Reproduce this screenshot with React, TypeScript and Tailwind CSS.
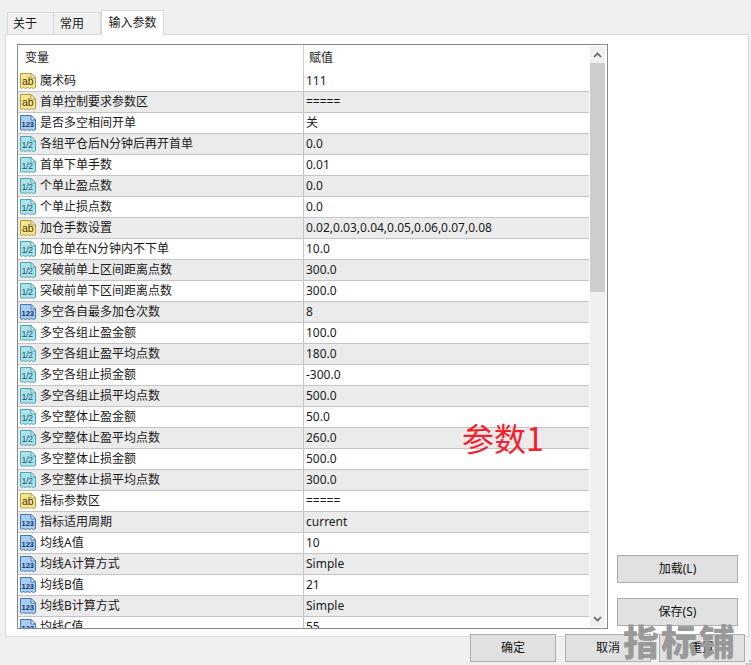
const rows: [string, string, string][] = [
  ['ab', '魔术码', '111'],
  ['ab', '首单控制要求参数区', '====='],
  ['int', '是否多空相间开单', '关'],
  ['dbl', '各组平仓后N分钟后再开首单', '0.0'],
  ['dbl', '首单下单手数', '0.01'],
  ['dbl', '个单止盈点数', '0.0'],
  ['dbl', '个单止损点数', '0.0'],
  ['ab', '加仓手数设置', '0.02,0.03,0.04,0.05,0.06,0.07,0.08'],
  ['dbl', '加仓单在N分钟内不下单', '10.0'],
  ['dbl', '突破前单上区间距离点数', '300.0'],
  ['dbl', '突破前单下区间距离点数', '300.0'],
  ['int', '多空各自最多加仓次数', '8'],
  ['dbl', '多空各组止盈金额', '100.0'],
  ['dbl', '多空各组止盈平均点数', '180.0'],
  ['dbl', '多空各组止损金额', '-300.0'],
  ['dbl', '多空各组止损平均点数', '500.0'],
  ['dbl', '多空整体止盈金额', '50.0'],
  ['dbl', '多空整体止盈平均点数', '260.0'],
  ['dbl', '多空整体止损金额', '500.0'],
  ['dbl', '多空整体止损平均点数', '300.0'],
  ['ab', '指标参数区', '====='],
  ['int', '指标适用周期', 'current'],
  ['int', '均线A值', '10'],
  ['int', '均线A计算方式', 'Simple'],
  ['int', '均线B值', '21'],
  ['int', '均线B计算方式', 'Simple'],
  ['int', '均线C值', '55'],
]

const iconColors: Record<string, { fill: string; stroke: string; text: string; label: string }> = {
  ab: { fill: '#f6e48e', stroke: '#b39c3c', text: '#4a3c08', label: 'ab' },
  int: { fill: '#a9cdf0', stroke: '#3f77b0', text: '#0c3566', label: '123' },
  dbl: { fill: '#ace3e8', stroke: '#49a3b2', text: '#14587a', label: '1/2' },
}

function TypeIcon({ type }: { type: string }) {
  const c = iconColors[type]
  return (
    <svg width="16" height="16" viewBox="0 0 16 16" className="shrink-0">
      <path
        d="M0.5 0.5 H11 L15.5 5 V14.5 L13.5 15.5 L11.5 14.5 L9.5 15.5 L7.5 14.5 L5.5 15.5 L3.5 14.5 L1.5 15.5 L0.5 14.5 Z"
        fill={c.fill}
        stroke={c.stroke}
      />
      <path d="M11 0.5 V5 H15.5 Z" fill="#ffffff" stroke={c.stroke} />
      <text
        x={type === 'ab' ? 2 : 1.5}
        y={type === 'int' ? 11.5 : 12}
        fontSize={type === 'ab' ? 10.5 : type === 'int' ? 7.5 : 9}
        fontWeight={type === 'int' ? 700 : 400}
        letterSpacing={type === 'dbl' ? -0.5 : 0}
        fontFamily="Liberation Sans, sans-serif"
        fill={c.text}
      >
        {c.label}
      </text>
    </svg>
  )
}

function Btn({ label, className }: { label: string; className: string }) {
  return (
    <div className={`flex items-center justify-center bg-[#e1e1e1] border border-[#adadad] text-[12px] text-[#111] ${className}`}>
      {label}
    </div>
  )
}

export default function App() {
  return (
    <div
      className="relative w-[751px] h-[665px] overflow-hidden bg-[#f0f0f0] text-[12px] text-[#1a1a1a]"
      style={{ fontFamily: '"Noto Sans", "Noto Sans CJK SC", sans-serif' }}
    >
      {/* Tabs */}
      <div className="flex items-end h-[35px] pl-[7px] relative z-10">
        <div className="w-[47px] h-[22px] flex items-center pl-[5px] border border-b-0 border-[#d9d9d9] bg-[#f0f0f0] mb-px">关于</div>
        <div className="w-[47px] h-[22px] flex items-center pl-[6px] border border-l-0 border-b-0 border-[#d9d9d9] bg-[#f0f0f0] mb-px">常用</div>
        <div className="w-[63px] h-[25px] flex items-center justify-center border border-b-0 border-[#d9d9d9] bg-white">输入参数</div>
      </div>

      {/* Panel */}
      <div className="ml-[5px] -mt-px w-[744px] h-[603px] bg-white border border-[#d9d9d9] pl-[11px] pt-[9px] flex">
        <div className="w-[591px] h-[585px] border border-[#828790] bg-white flex overflow-hidden shrink-0">
          <div className="w-[571px] overflow-hidden">
            <div className="flex h-[26px] items-center">
              <div className="w-[286px] h-full pl-[7px] flex items-center border-r border-[#d0d0d0]">变量</div>
              <div className="pl-[5px]">赋值</div>
            </div>
            {rows.map(([type, name, value], i) => (
              <div
                key={name}
                className={`flex h-[21px] border-b border-[#c4c4c4] ${i % 2 === 1 ? 'bg-[#ebebeb]' : 'bg-white'}`}
              >
                <div className="w-[286px] pl-[2px] flex items-center gap-[4px] border-r border-[#c4c4c4] whitespace-nowrap">
                  <TypeIcon type={type} />
                  <span>{name}</span>
                </div>
                <div className="pl-[2px] flex items-center whitespace-nowrap">{value}</div>
              </div>
            ))}
          </div>
          {/* Scrollbar */}
          <div className="ml-[1px] w-[15px] my-px bg-[#f0f0f0] flex flex-col">
            <div className="h-[17px] flex items-center justify-center">
              <svg width="9" height="6" viewBox="0 0 9 6">
                <path d="M1 5 L4.5 1.5 L8 5" fill="none" stroke="#606060" strokeWidth="1.6" />
              </svg>
            </div>
            <div className="h-[229px] bg-[#cdcdcd]" />
            <div className="flex-1" />
            <div className="h-[17px] flex items-center justify-center">
              <svg width="9" height="6" viewBox="0 0 9 6">
                <path d="M1 1 L4.5 4.5 L8 1" fill="none" stroke="#606060" strokeWidth="1.6" />
              </svg>
            </div>
          </div>
        </div>

        <div className="ml-[9px] w-[121px] flex flex-col pt-[511px] gap-[15px]">
          <Btn label="加载(L)" className="h-[28px]" />
          <Btn label="保存(S)" className="h-[28px]" />
        </div>
      </div>

      {/* Bottom buttons */}
      <div className="relative -mt-[3px] flex justify-end pr-[6px]">
        <Btn label="确定" className="w-[86px] h-[28px]" />
        <Btn label="取消" className="w-[86px] h-[28px] ml-[9px]" />
        <Btn label="重置" className="w-[86px] h-[28px] ml-[8px]" />
      </div>

      {/* Resize grip */}
      <svg width="6" height="5" viewBox="0 0 6 5" className="absolute right-0 bottom-0">
        <path d="M4 0h2v2H4zM1 3h2v2H1zM4 3h2v2H4z" fill="#b8b8b8" />
      </svg>

      {/* Overlaid annotation and watermark */}
      <div className="absolute left-[462px] top-[415px] text-[32px] leading-[44px] text-[#f5222d]" style={{ fontFamily: '"Noto Sans CJK SC", sans-serif' }}>
        参数1
      </div>
      <div className="absolute left-[623px] top-[618px] text-[36px] leading-[44px] font-black tracking-[2px] text-[#999999] whitespace-nowrap" style={{ fontFamily: '"Noto Sans CJK SC", sans-serif' }}>
        指标铺
      </div>
    </div>
  )
}
